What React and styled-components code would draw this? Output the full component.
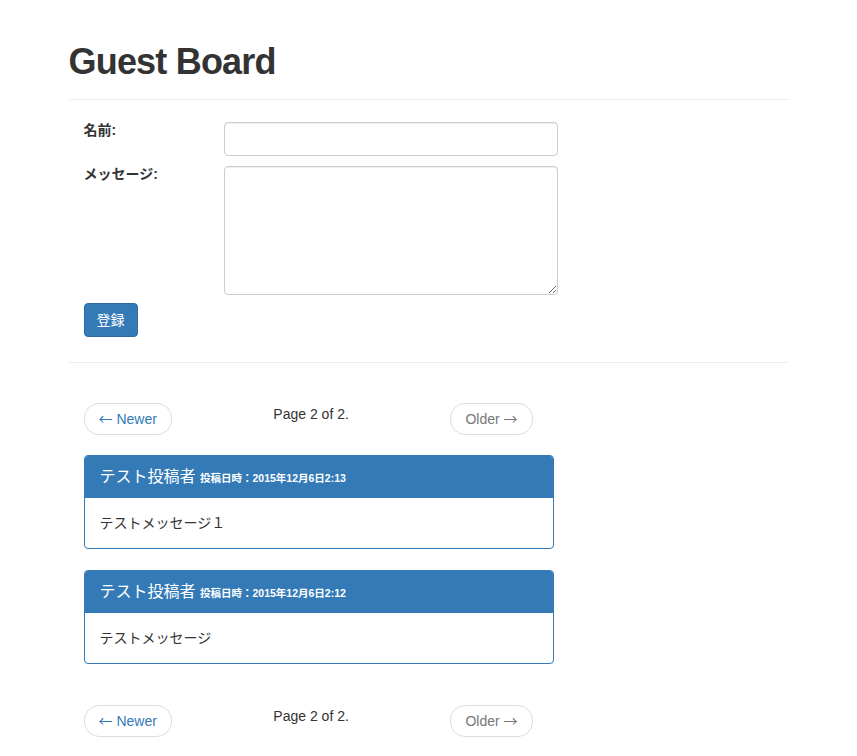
import styled, { createGlobalStyle } from 'styled-components';

const GlobalStyle = createGlobalStyle`
    body {
        margin: 0;
        font-family: 'Liberation Sans', 'Noto Sans CJK JP', sans-serif;
        font-size: 14px;
        line-height: 20px;
        color: #333;
        background-color: #fff;
    }
`;

const posts = [
    { id: 2, name: 'テスト投稿者', date: '2015年12月6日2:13', message: 'テストメッセージ１' },
    { id: 1, name: 'テスト投稿者', date: '2015年12月6日2:12', message: 'テストメッセージ' },
];

const Pager = () => (
    <PagerRow>
        <PagerLink href="#">
            <Arrow>←</Arrow> Newer
        </PagerLink>
        <PageInfo>Page 2 of 2.</PageInfo>
        <PagerLink disabled>
            Older <Arrow>→</Arrow>
        </PagerLink>
    </PagerRow>
);

const App = () => {
    return (
        <>
            <GlobalStyle />
            <Container>
                <PageHeader>
                    <Title>Guest Board</Title>
                </PageHeader>
                <Form onSubmit={(e) => e.preventDefault()}>
                    <FieldGrid>
                        <Label htmlFor="name">名前:</Label>
                        <Input id="name" type="text" />
                        <Label htmlFor="message">メッセージ:</Label>
                        <TextArea id="message" />
                    </FieldGrid>
                    <Button type="submit">登録</Button>
                </Form>
                <Divider />
                <Section>
                    <Pager />
                    <PanelList>
                        {posts.map((post) => (
                            <Panel key={post.id}>
                                <PanelHeading>
                                    {post.name} <small>投稿日時：{post.date}</small>
                                </PanelHeading>
                                <PanelBody>{post.message}</PanelBody>
                            </Panel>
                        ))}
                    </PanelList>
                    <Pager />
                </Section>
            </Container>
        </>
    );
};

export default App;

const Container = styled.div`
    width: 720px;
    padding: 0 15px;
    margin: 0 auto;
`;

const PageHeader = styled.div`
    margin: 42px 0 20px;
    padding-bottom: 9px;
    border-bottom: 1px solid #eee;
`;

const Title = styled.h1`
    margin: 0 0 8px;
    font-size: 36px;
    line-height: 40px;
    font-weight: bold;
    letter-spacing: -0.8px;
`;

const Form = styled.form`
    padding: 2px 15px 0;
`;

const FieldGrid = styled.div`
    display: grid;
    grid-template-columns: 140px 334px;
    row-gap: 10px;
    align-items: start;
`;

const Label = styled.label`
    font-weight: bold;
    margin-top: -2px;
`;

const fieldStyle = `
    box-sizing: border-box;
    width: 334px;
    border: 1px solid #ccc;
    border-radius: 4px;
    box-shadow: inset 0 1px 1px rgba(0, 0, 0, 0.075);
    padding: 6px 12px;
    font-family: inherit;
    font-size: 14px;
    color: #555;
    outline: none;
    margin: 0;
`;

const Input = styled.input`
    ${fieldStyle}
    height: 34px;
`;

const TextArea = styled.textarea`
    ${fieldStyle}
    height: 129px;
    display: block;
`;

const Button = styled.button`
    margin-top: 8px;
    height: 34px;
    padding: 6px 12px;
    font-family: inherit;
    font-size: 14px;
    line-height: 20px;
    color: #fff;
    background-color: #337ab7;
    border: 1px solid #2e6da4;
    border-radius: 4px;
    cursor: pointer;
`;

const Divider = styled.hr`
    margin: 25px 0 0;
    border: 0;
    border-top: 1px solid #eee;
`;

const Section = styled.div`
    display: flex;
    flex-direction: column;
    align-items: flex-start;
    padding: 40px 15px 0;
`;

const PagerRow = styled.div`
    width: 449px;
    display: flex;
    justify-content: space-between;
    align-items: flex-start;
`;

const PagerLink = styled.a`
    display: inline-block;
    height: 20px;
    padding: 5px 14px;
    line-height: 20px;
    border: 1px solid #ddd;
    border-radius: 15px;
    background-color: #fff;
    color: ${(props) => (props.disabled ? '#777' : '#337ab7')};
    text-decoration: none;
`;

const Arrow = styled.span`
    font-family: 'Noto Sans CJK JP', sans-serif;
    font-size: 14px;
    line-height: 1;
`;

const PageInfo = styled.span`
    margin-top: 1px;
`;

const PanelList = styled.div`
    display: flex;
    flex-direction: column;
    gap: 21px;
    margin: 20px 0 41px;
    width: 470px;
`;

const Panel = styled.div`
    border: 1px solid #337ab7;
    border-radius: 4px;
    overflow: hidden;
`;

const PanelHeading = styled.div`
    height: 22px;
    background-color: #337ab7;
    color: #fff;
    padding: 10px 15px;
    font-size: 16px;
    line-height: 22px;

    small {
        font-size: 10.5px;
        font-weight: bold;
        line-height: 1;
    }
`;

const PanelBody = styled.div`
    height: 20px;
    padding: 15px;
`;
